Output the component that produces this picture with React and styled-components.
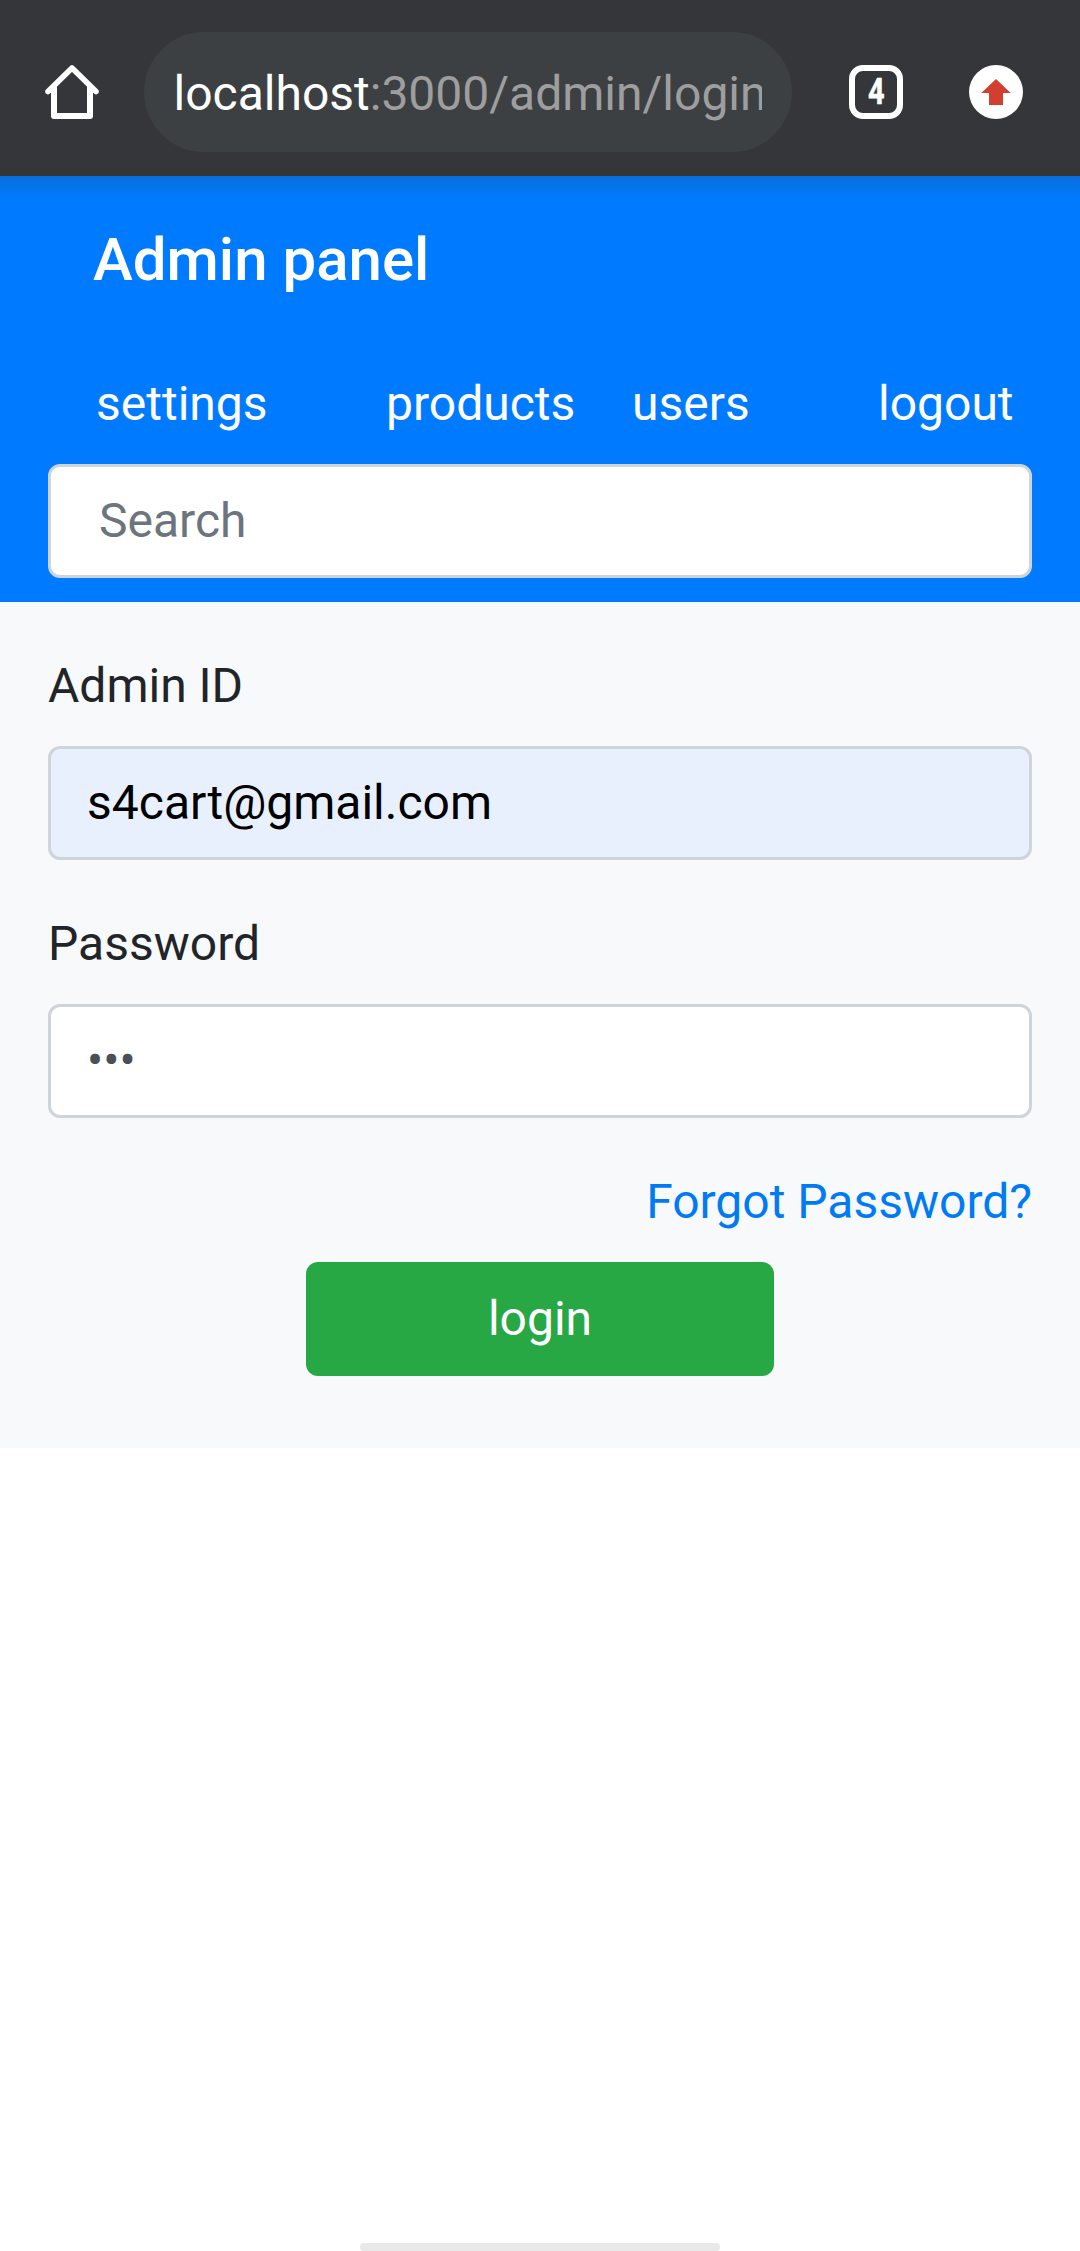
import React from "react";
import styled, { createGlobalStyle } from "styled-components";

const GlobalStyle = createGlobalStyle`
  *, *::before, *::after { box-sizing: border-box; }
  body {
    margin: 0;
    background: #fff;
    color: #212529;
    font-family: Roboto, "Liberation Sans", sans-serif;
    font-size: 48px;
    line-height: 72px;
  }
`;

const Screen = styled.div`
  display: flex;
  flex-direction: column;
  width: 1080px;
  height: 2251px;
  overflow: hidden;
`;

const BrowserBar = styled.header`
  display: flex;
  align-items: center;
  height: 176px;
  flex: none;
  padding: 8px 57px 0 45px;
  background: linear-gradient(#35363a 85%, #333537);
`;

const HomeIcon = styled.svg`
  width: 54px;
  height: 54px;
  flex: none;
`;

const AddressPill = styled.div`
  width: 648px;
  height: 120px;
  margin-left: 45px;
  padding: 0 30px 0 29.5px;
  border-radius: 60px;
  background: #3c4043;
`;

const Address = styled.div`
  overflow: hidden;
  white-space: nowrap;
  line-height: 124px;
  color: #9e9e9e;
`;

const Host = styled.span`
  color: #fff;
`;

const TabCount = styled.div`
  display: flex;
  align-items: center;
  justify-content: center;
  width: 54px;
  height: 54px;
  margin-left: 57px;
  border: 6px solid #fff;
  border-radius: 14px;
  color: #fff;
  font-size: 36px;
  font-weight: 700;
  line-height: 42px;
`;

const Digit = styled.span`
  transform: scaleX(0.8);
  -webkit-text-stroke: 0.6px #fff;
`;

const UpdateIcon = styled.svg`
  width: 54px;
  height: 54px;
  margin-left: 66px;
  flex: none;
`;

const Navbar = styled.nav`
  height: 426px;
  flex: none;
  padding: 38px 48px 24px;
  background: linear-gradient(rgba(50, 50, 50, 0.19), rgba(50, 50, 50, 0) 22px) #007bff;
`;

const Brand = styled.div`
  padding-left: 45px;
  color: #fff;
  font-size: 60px;
  font-weight: 500;
  line-height: 92px;
`;

const Links = styled.div`
  display: grid;
  grid-template-columns: 290px 246px 246px auto;
  margin-top: 38px;
  padding: 24px 0 24px 48px;
  margin-right: -24px;
`;

const NavLink = styled.a`
  color: #fff;
  text-decoration: none;
`;

const Input = styled.input`
  display: block;
  width: 100%;
  height: 114px;
  padding: 17px ${(p) => p.$inset || 36}px 19px;
  border: 3px solid #ced4da;
  border-radius: 12px;
  outline: none;
  background: ${(p) => (p.$filled ? "#e8f0fe" : "#fff")};
  color: ${(p) => (p.$filled ? "#000" : "#495057")};
  font: inherit;
  &::placeholder { color: #6c757d; opacity: 1; }
`;

const LoginForm = styled.form`
  display: flex;
  flex-direction: column;
  flex: none;
  height: 846px;
  padding: 48px;
  background: #f8f9fa;
`;

const Field = styled.label`
  display: flex;
  flex-direction: column;
  gap: 24px;
  margin-bottom: 48px;
`;

const ForgotLink = styled.a`
  align-self: flex-end;
  color: #007bf4;
  text-decoration: none;
`;

const LoginButton = styled.button`
  align-self: center;
  width: 468px;
  height: 114px;
  margin-top: 24px;
  padding: 0;
  border: 0;
  border-radius: 12px;
  background: #28a745;
  color: #fff;
  font: inherit;
`;

const GestureBar = styled.div`
  width: 360px;
  height: 8px;
  margin: auto auto 0;
  border-radius: 4px;
  background: #e9e9e9;
`;

export default function App() {
  return (
    <>
      <GlobalStyle />
      <Screen>
        <BrowserBar>
          <HomeIcon viewBox="0 0 54 54" fill="none" stroke="#fff" strokeWidth="6" strokeLinecap="round" strokeLinejoin="round">
            <path d="M3 26.5 27 3 51 26.5" strokeWidth="5.6" />
            <path d="M9 23V51H45V23" />
          </HomeIcon>
          <AddressPill>
            <Address><Host>localhost</Host>:3000/admin/login</Address>
          </AddressPill>
          <TabCount><Digit>4</Digit></TabCount>
          <UpdateIcon viewBox="0 0 54 54">
            <circle cx="27" cy="27" r="27" fill="#fff" />
            <path d="M27 14 41.7 28H34V40H20V28H12.3Z" fill="#d23f31" />
          </UpdateIcon>
        </BrowserBar>
        <Navbar>
          <Brand>Admin panel</Brand>
          <Links>
            <NavLink>settings</NavLink>
            <NavLink>products</NavLink>
            <NavLink>users</NavLink>
            <NavLink>logout</NavLink>
          </Links>
          <Input $inset={48} placeholder="Search" />
        </Navbar>
        <LoginForm>
          <Field>
            Admin ID
            <Input $filled defaultValue="s4cart@gmail.com" spellCheck={false} />
          </Field>
          <Field>
            Password
            <Input type="password" defaultValue="123" />
          </Field>
          <ForgotLink>Forgot Password?</ForgotLink>
          <LoginButton type="button">login</LoginButton>
        </LoginForm>
        <GestureBar />
      </Screen>
    </>
  );
}
